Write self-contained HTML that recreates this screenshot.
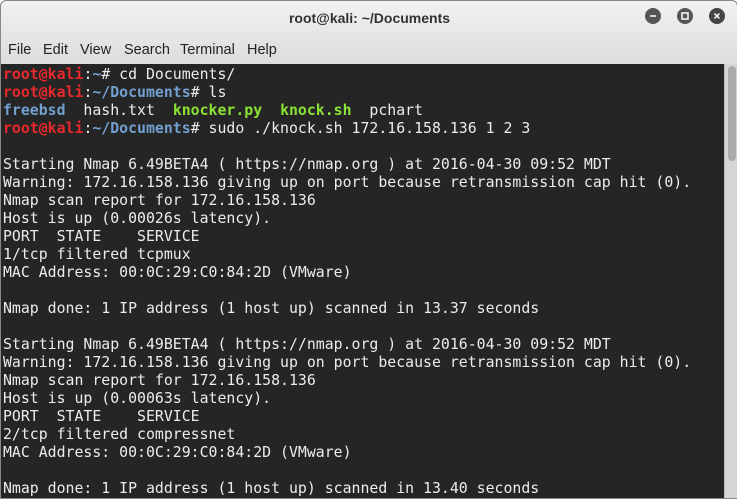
<!DOCTYPE html>
<html><head><style>
body{margin:0;width:737px;height:498px;overflow:hidden;background:#fff;font-family:"Liberation Sans",sans-serif}
.win{position:absolute;left:0;top:0;width:736px;height:497px;border:1px solid #888;border-radius:6px 6px 0 0;overflow:hidden;background:linear-gradient(#f2f2f2,#dcdcdc 63px)}
.title{position:absolute;top:9px;left:0;width:737px;text-align:center;font-weight:bold;font-size:14px;color:#333}
.menu span{position:absolute;top:41px;font-size:14.5px;color:#222}
.btn{position:absolute;top:7px;width:16px;height:16px;border-radius:50%;background:#555}
.term{position:absolute;top:63px;left:0;width:723px;height:435px;background:#252525;font-family:"DejaVu Sans Mono","Liberation Mono",monospace;font-size:14.85px;line-height:18px;color:#ececec;white-space:pre;padding-left:2px;padding-top:1px}
.r{color:#e8292b;font-weight:bold}.b{color:#729fcf;font-weight:bold}.g{color:#8ae234;font-weight:bold}
.sb{position:absolute;top:63px;left:723px;width:13px;height:434px;background:#d6d6d6;border-left:1px solid #bbb}
.th{position:absolute;top:2px;left:3px;width:8px;height:95px;background:#aaa;border-radius:4px}
</style></head><body>
<div class="win">
<div class="title">root@kali: ~/Documents</div>
<div class="btn" style="left:644px"><svg width="16" height="16"><path d="M5 8h6" stroke="#fff" stroke-width="1.5"/></svg></div>
<div class="btn" style="left:676px"><svg width="16" height="16"><rect x="5" y="5" width="6" height="6" fill="none" stroke="#fff" stroke-width="1.5"/></svg></div>
<div class="btn" style="left:708px;background:#444"><svg width="16" height="16"><path d="M5.5 5.5l5 5M10.5 5.5l-5 5" stroke="#fff" stroke-width="1.5"/></svg></div>
<div class="menu"><span style="left:7px">File</span><span style="left:42px">Edit</span><span style="left:79px">View</span><span style="left:123px">Search</span><span style="left:179px">Terminal</span><span style="left:246px">Help</span></div>
<div class="term"><span class="r">root@kali</span>:<span class="b">~</span># cd Documents/
<span class="r">root@kali</span>:<span class="b">~/Documents</span># ls
<span class="b">freebsd</span>  hash.txt  <span class="g">knocker.py</span>  <span class="g">knock.sh</span>  pchart
<span class="r">root@kali</span>:<span class="b">~/Documents</span># sudo ./knock.sh 172.16.158.136 1 2 3

Starting Nmap 6.49BETA4 ( https://nmap.org ) at 2016-04-30 09:52 MDT
Warning: 172.16.158.136 giving up on port because retransmission cap hit (0).
Nmap scan report for 172.16.158.136
Host is up (0.00026s latency).
PORT  STATE    SERVICE
1/tcp filtered tcpmux
MAC Address: 00:0C:29:C0:84:2D (VMware)

Nmap done: 1 IP address (1 host up) scanned in 13.37 seconds

Starting Nmap 6.49BETA4 ( https://nmap.org ) at 2016-04-30 09:52 MDT
Warning: 172.16.158.136 giving up on port because retransmission cap hit (0).
Nmap scan report for 172.16.158.136
Host is up (0.00063s latency).
PORT  STATE    SERVICE
2/tcp filtered compressnet
MAC Address: 00:0C:29:C0:84:2D (VMware)

Nmap done: 1 IP address (1 host up) scanned in 13.40 seconds</div>
<div class="sb"><div class="th"></div></div>
</div>
</body></html>
